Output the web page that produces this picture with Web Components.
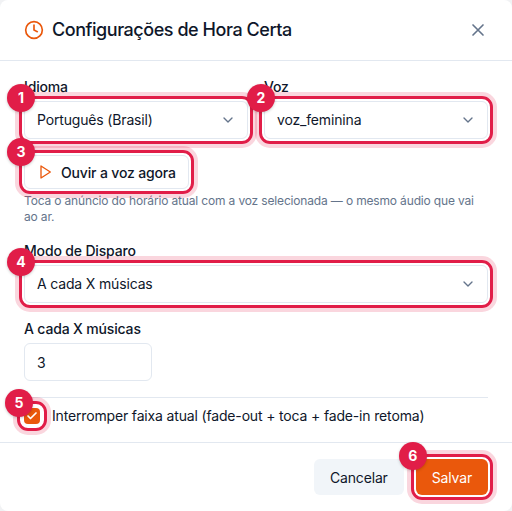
<!doctype html>
<html lang="pt-BR">
<head>
<meta charset="utf-8">
<title>Configurações de Hora Certa</title>
<style>
html,body{margin:0;padding:0;height:100%;background:#f1f2f4}
body{font-family:Inter,"Liberation Sans",sans-serif;color:#0f172a;letter-spacing:-.01em}
</style>
</head>
<body>
<hora-dialog>
  <span slot="title">Configurações de Hora Certa</span>
  <form-row>
    <form-field label="Idioma">
      <tour-mark n="1"><select-box>Português (Brasil)</select-box></tour-mark>
    </form-field>
    <form-field label="Voz">
      <tour-mark n="2"><select-box>voz_feminina</select-box></tour-mark>
    </form-field>
  </form-row>
  <listen-block>
    <tour-mark n="3" slot="button"><play-button>Ouvir a voz agora</play-button></tour-mark>
    Toca o anúncio do horário atual com a voz selecionada — o mesmo áudio que vai ao ar.
  </listen-block>
  <form-field label="Modo de Disparo">
    <tour-mark n="4"><select-box>A cada X músicas</select-box></tour-mark>
  </form-field>
  <form-field label="A cada X músicas">
    <number-box>3</number-box>
  </form-field>
  <check-row>Interromper faixa atual (fade-out + toca + fade-in retoma)</check-row>
  <action-button slot="footer">Cancelar</action-button>
  <tour-mark n="6" slot="footer"><action-button primary>Salvar</action-button></tour-mark>
</hora-dialog>
<script>
const shadow=(el,html)=>{el.attachShadow({mode:'open'}).innerHTML=html};

class HoraDialog extends HTMLElement{
  constructor(){
    super();
    shadow(this,`<style>
:host{display:flex;flex-direction:column;box-sizing:border-box;width:512px;height:511px;background:#fff;border-radius:8px;overflow:hidden}
header{display:flex;align-items:center;gap:8px;height:60px;padding:0 24px;border-bottom:1px solid #e2e8f0}
header svg.clock{width:20px;height:20px;flex:none;color:#ea580c}
h2{flex:1;margin:0;font-size:18px;font-weight:500;line-height:28px;letter-spacing:-.45px;color:#0f172a}
button{display:flex;width:20px;height:20px;padding:0;border:0;background:none;color:#64748b}
main{flex:1;display:flex;flex-direction:column;gap:16px;padding:16px 24px 0}
footer{display:flex;justify-content:flex-end;gap:12px;padding:16px 24px;border-top:1px solid #e2e8f0}
</style>
<header>
  <svg class="clock" viewBox="0 0 24 24" fill="none" stroke="currentColor" stroke-width="2" stroke-linecap="round" stroke-linejoin="round"><circle cx="12" cy="12" r="10"/><path d="M12 6v6l4 2"/></svg>
  <h2><slot name="title"></slot></h2>
  <button aria-label="Fechar"><svg viewBox="0 0 24 24" fill="none" stroke="currentColor" stroke-width="2" stroke-linecap="round" stroke-linejoin="round"><path d="M18 6 6 18M6 6l12 12"/></svg></button>
</header>
<main><slot></slot></main>
<footer><slot name="footer"></slot></footer>`);
  }
}

class FormRow extends HTMLElement{
  constructor(){
    super();
    shadow(this,`<style>:host{display:grid;grid-template-columns:1fr 1fr;gap:16px}</style><slot></slot>`);
  }
}

class FormField extends HTMLElement{
  constructor(){
    super();
    shadow(this,`<style>
:host{display:flex;flex-direction:column;gap:4px}
label{font-size:14px;font-weight:500;line-height:20px;color:#0f172a}
</style><label></label><slot></slot>`);
  }
  connectedCallback(){
    this.shadowRoot.querySelector('label').textContent=this.getAttribute('label');
  }
}

class TourMark extends HTMLElement{
  constructor(){
    super();
    shadow(this,`<style>
:host{display:block;position:relative;--o:-5px;--b:-17px}
:host([wide]){--o:-7px;--b:-19px}
.ring{position:absolute;inset:var(--o);border:3px solid #e11d48;border-radius:11px;box-shadow:0 0 0 4px rgba(225,29,72,.18);pointer-events:none}
.badge{position:absolute;left:var(--b);top:var(--b);z-index:5;width:28px;height:28px;border-radius:50%;background:#e11d48;color:#fff;font-size:14px;font-weight:700;line-height:28px;text-align:center;letter-spacing:0;box-shadow:0 1px 3px rgba(0,0,0,.2)}
</style><slot></slot><div class="ring"></div><div class="badge"></div>`);
  }
  connectedCallback(){
    this.shadowRoot.querySelector('.badge').textContent=this.getAttribute('n');
  }
}

class SelectBox extends HTMLElement{
  constructor(){
    super();
    shadow(this,`<style>
:host{display:flex;align-items:center;justify-content:space-between;box-sizing:border-box;height:38px;padding:0 11px 0 12px;background:#fff;border:1px solid #e2e8f0;border-radius:6px;font-size:14px;color:#0f172a}
span{padding-bottom:2px}
svg{width:16px;height:16px;color:#64748b}
</style><span><slot></slot></span><svg viewBox="0 0 24 24" fill="none" stroke="currentColor" stroke-width="2" stroke-linecap="round" stroke-linejoin="round"><path d="m6 9 6 6 6-6"/></svg>`);
  }
}

class PlayButton extends HTMLElement{
  constructor(){
    super();
    shadow(this,`<style>
:host{display:flex;align-items:center;gap:8px;box-sizing:border-box;height:34px;padding:0 12px;background:#fff;border:1px solid #e2e8f0;border-radius:6px;font-size:14px;font-weight:500;color:#0f172a}
svg{width:16px;height:16px;color:#ea580c;flex:none}
</style><svg viewBox="0 0 24 24" fill="none" stroke="currentColor" stroke-width="2" stroke-linecap="round" stroke-linejoin="round"><polygon points="6 3 20 12 6 21 6 3"/></svg><slot></slot>`);
  }
}

class ListenBlock extends HTMLElement{
  constructor(){
    super();
    shadow(this,`<style>
:host{display:block}
.b{display:flex}
p{margin:4px 0 0;font-size:12px;line-height:16px;color:#64748b}
</style><div class="b"><slot name="button"></slot></div><p><slot></slot></p>`);
  }
}

class NumberBox extends HTMLElement{
  constructor(){
    super();
    shadow(this,`<style>
:host{display:flex;align-items:center;box-sizing:border-box;width:128px;height:38px;padding:0 12px;background:#fff;border:1px solid #e2e8f0;border-radius:6px;font-size:14px;color:#0f172a}
</style><slot></slot>`);
  }
}

class CheckRow extends HTMLElement{
  constructor(){
    super();
    shadow(this,`<style>
:host{display:block;border-top:1px solid #e2e8f0;padding-top:8px}
.row{display:flex;align-items:center;gap:12px;font-size:14px;line-height:20px;color:#0f172a}
.box{position:relative;width:16px;height:16px;border-radius:4px;background:#ea580c;color:#fff;flex:none}
svg{position:absolute;inset:2px;width:12px;height:12px}
tour-mark{flex:none}
</style><div class="row"><tour-mark n="5" wide><div class="box"><svg viewBox="0 0 24 24" fill="none" stroke="currentColor" stroke-width="3.5" stroke-linecap="round" stroke-linejoin="round"><path d="M20 6 9 17l-5-5"/></svg></div></tour-mark><span><slot></slot></span></div>`);
  }
}

class ActionButton extends HTMLElement{
  constructor(){
    super();
    shadow(this,`<style>
:host{display:flex;align-items:center;justify-content:center;box-sizing:border-box;height:36px;padding:0 16px;border-radius:6px;background:#f1f5f9;color:#0f172a;font-size:14px;font-weight:400}
:host([primary]){background:#ea580c;color:#fff}
</style><slot></slot>`);
  }
}

customElements.define('hora-dialog',HoraDialog);
customElements.define('form-row',FormRow);
customElements.define('form-field',FormField);
customElements.define('tour-mark',TourMark);
customElements.define('select-box',SelectBox);
customElements.define('play-button',PlayButton);
customElements.define('listen-block',ListenBlock);
customElements.define('number-box',NumberBox);
customElements.define('check-row',CheckRow);
customElements.define('action-button',ActionButton);
</script>
</body>
</html>
